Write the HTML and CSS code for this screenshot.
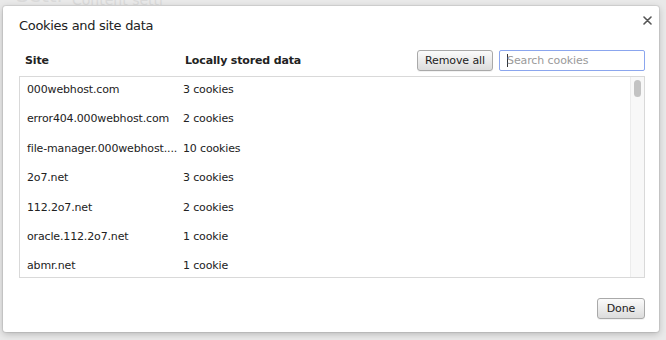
FILE: index.html
```html
<!DOCTYPE html>
<html>
<head>
<meta charset="utf-8">
<link rel="stylesheet" href="styles.css">
</head>
<body>
<div class="backdrop">
  <div class="bg-title">Setti</div>
  <div class="bg-sub">Content setti</div>
</div>
<div class="dialog">
  <div class="title-row">
    <h1 class="title">Cookies and site data</h1>
    <svg class="close" width="9" height="9" viewBox="0 0 9 9"><path d="M1 1L8 8M8 1L1 8" stroke="#555" stroke-width="1.6" stroke-linecap="round"/></svg>
  </div>
  <div class="toolbar">
    <div class="col-site head">Site</div>
    <div class="col-data head">Locally stored data</div>
    <button class="btn remove">Remove all</button>
    <div class="search"><span class="caret"></span><span class="placeholder">Search cookies</span></div>
  </div>
  <div class="list">
    <div class="rows">
      <div class="row"><div class="col-site">000webhost.com</div><div class="col-data">3 cookies</div></div>
      <div class="row"><div class="col-site">error404.000webhost.com</div><div class="col-data">2 cookies</div></div>
      <div class="row"><div class="col-site">file-manager.000webhost....</div><div class="col-data">10 cookies</div></div>
      <div class="row"><div class="col-site">2o7.net</div><div class="col-data">3 cookies</div></div>
      <div class="row"><div class="col-site">112.2o7.net</div><div class="col-data">2 cookies</div></div>
      <div class="row"><div class="col-site">oracle.112.2o7.net</div><div class="col-data">1 cookie</div></div>
      <div class="row"><div class="col-site">abmr.net</div><div class="col-data">1 cookie</div></div>
    </div>
    <div class="scrollbar"><div class="thumb"></div></div>
  </div>
  <div class="footer">
    <button class="btn done">Done</button>
  </div>
</div>
</body>
</html>
```
FILE: styles.css
```css
html, body {
  margin: 0;
  padding: 0;
}
body {
  width: 666px;
  height: 340px;
  overflow: hidden;
  background: #e9e9e9;
  font-family: "DejaVu Sans", "Liberation Sans", sans-serif;
  color: #222;
  position: relative;
  padding: 6px 7px 0 3px;
  box-sizing: border-box;
}
.backdrop {
  position: absolute;
  left: 0;
  top: 0;
  right: 0;
  bottom: 0;
  color: #dadada;
}
.bg-title {
  position: absolute;
  left: 16px;
  top: -17px;
  font-size: 20px;
}
.bg-sub {
  position: absolute;
  left: 72px;
  top: -8px;
  font-size: 14px;
}
.dialog {
  position: relative;
  width: 656px;
  height: 326px;
  background: #fff;
  border-radius: 3px;
  box-shadow: 0 0 0 1px rgba(0,0,0,0.07), 0 2px 7px rgba(0,0,0,0.22);
  box-sizing: border-box;
  padding: 0 14px 13px 16px;
  display: flex;
  flex-direction: column;
}
.title-row {
  display: flex;
  align-items: flex-start;
  justify-content: space-between;
  height: 44px;
}
.title {
  margin: 0;
  padding-top: 11px;
  font-size: 13px;
  letter-spacing: -0.3px;
  font-weight: normal;
  line-height: 18px;
  color: #222;
}
.close {
  margin-top: 10px;
  margin-right: -7px;
}
.toolbar {
  display: flex;
  align-items: center;
  height: 21px;
}
.head {
  font-weight: bold;
  font-size: 11px;
  letter-spacing: -0.15px;
}
.col-site {
  width: 158px;
  padding-left: 6px;
  white-space: nowrap;
  overflow: hidden;
}
.col-data {
  flex: 1;
  white-space: nowrap;
}
.toolbar .col-data {
  padding-left: 2px;
}
.btn {
  font-family: inherit;
  font-size: 11px;
  letter-spacing: -0.1px;
  white-space: nowrap;
  color: #222;
  height: 21px;
  padding: 0;
  border: 1px solid #a9a9a9;
  border-radius: 3px;
  background: linear-gradient(#fbfbfb, #dcdcdc);
  box-shadow: 0 1px 0 rgba(0,0,0,0.05);
}
.remove {
  width: 76px;
  margin-right: 6px;
}
.search {
  width: 146px;
  height: 21px;
  box-sizing: border-box;
  border: 1px solid #8ba6ee;
  border-radius: 2px;
  display: flex;
  align-items: center;
  padding-left: 7px;
  font-size: 11px;
  letter-spacing: -0.1px;
}
.caret {
  width: 1px;
  height: 13px;
  background: #333;
  margin-right: -1px;
}
.placeholder {
  color: #9a9a9a;
}
.list {
  margin-top: 5px;
  height: 202px;
  box-sizing: border-box;
  border: 1px solid #d9d9d9;
  display: flex;
  overflow: hidden;
}
.rows {
  flex: 1;
  display: flex;
  flex-direction: column;
}
.row {
  display: flex;
  height: 29.4px;
  flex-shrink: 0;
  padding-top: 5px;
  box-sizing: border-box;
  font-size: 11px;
  letter-spacing: -0.15px;
  line-height: 16px;
}
.row .col-site {
  width: 156px;
  padding-left: 7px;
  text-overflow: clip;
}
.scrollbar {
  width: 13px;
  background: #f8f8f8;
  border-left: 1px solid #ececec;
  display: flex;
  justify-content: center;
}
.thumb {
  width: 7px;
  height: 17px;
  margin-top: 3px;
  border-radius: 4px;
  background: #c3c3c3;
}
.footer {
  margin-top: auto;
  display: flex;
  justify-content: flex-end;
}
.done {
  width: 48px;
}
```
